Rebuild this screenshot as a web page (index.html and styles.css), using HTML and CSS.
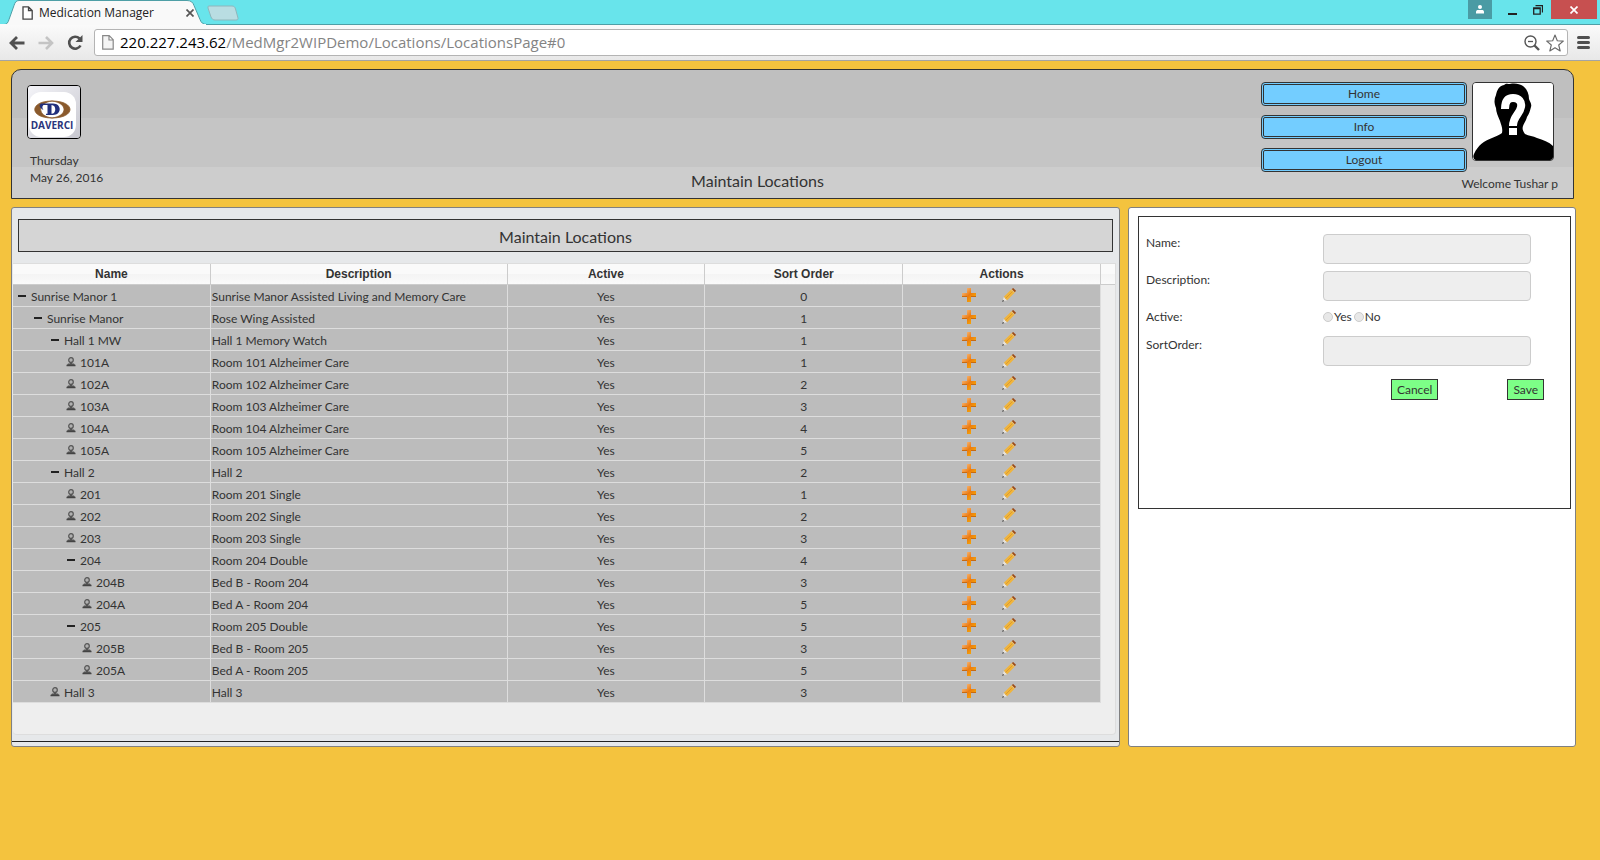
FILE: index.html
```html
<!DOCTYPE html>
<html lang="en">
<head>
<meta charset="utf-8">
<title>Medication Manager</title>
<link rel="stylesheet" href="styles.css">
</head>
<body>
<svg class="sprite" aria-hidden="true">
  <defs>
    <linearGradient id="orange" x1="0" y1="0" x2="1" y2="1"><stop offset="0" stop-color="#f9cfa0"/><stop offset=".5" stop-color="#ec7a10"/><stop offset="1" stop-color="#fac000"/></linearGradient>
    <symbol id="plus" viewBox="0 0 14 14"><path d="M5 0h4v5h5v4H9v5H5V9H0V5h5z" fill="url(#orange)"/><path d="M0 8.500h5M9 8.500h5" stroke="#c96a10"/></symbol>
    <symbol id="pencil" viewBox="0 0 15 15"><path d="M.5 14.500l1.500-5 3.500 3.500z" fill="#e8e4dc"/><path d="M0 15l1-2.500 1.500 1.500z" fill="#444"/><path d="M2 9.500l8.500-8.500 3.500 3.500L5.500 13z" fill="#f0b43c"/><path d="M3.800 11.200l8.500-8.500" stroke="#dc9a2c"/><path d="M10.500 1.200L12 0l3 3-1.200 1.500z" fill="#9c4a16"/><path d="M10 1.800l3.200 3.200" stroke="#dcd0b8" stroke-width=".8"/></symbol>
    <symbol id="person" viewBox="0 0 10 10"><circle cx="5" cy="3" r="2.300" fill="#b0b0b0" stroke="#555" stroke-width="1.200"/><path d="M3.500 5h3l-.5 1.500h2L9 8H1l1-1.500h2z" fill="#555"/><path d="M.5 8.500h9" stroke="#444" stroke-width="1.500"/></symbol>
    <symbol id="minus" viewBox="0 0 8 8"><path d="M0 3h8v2H0z" fill="#222"/></symbol>
  </defs>
</svg>

<header class="browser">
  <div class="tabstrip">
    <div class="tab">
      <svg class="tab-shape" viewBox="0 0 240 25" width="240" height="25" aria-hidden="true">
        <path d="M0 24.500h4c3 0 4-2 5-5l5-14c1-3 2-5 5-5h168c4 0 6 2 7 5l6 14c1 3 3 5 7 5v1H0z" fill="#f9f9f9" stroke="#4e9fa6"/>
        <path d="M0 25h206" stroke="#f9f9f9" stroke-width="2"/>
        <path d="M218 6h14c2 0 3 1 3.500 3l2.500 9c0 1 0 2-2 2h-21c-2 0-3-1-4-3l-3-9c0-2 0-2 2-2z" fill="#b9dde2" stroke="#8fb6bb"/>
      </svg>
      <svg class="tab-doc" viewBox="0 0 11 14" width="11" height="14" aria-hidden="true"><path d="M1 .8h5.500l3.700 3.700v8.700H1zM6.500 1v3.500H10" fill="#fff" stroke="#444" stroke-width="1.300"/></svg>
      <span class="tab-title">Medication Manager</span>
      <button class="tab-close" aria-label="Close tab"><svg viewBox="0 0 8 8" width="8" height="8"><path d="M.5.5l7 7M7.500.5l-7 7" stroke="#555" stroke-width="1.700"/></svg></button>
    </div>
    <div class="window-buttons">
      <button class="wb wb-user" aria-label="User"><svg viewBox="0 0 8 9" width="8" height="9"><circle cx="4" cy="2" r="2" fill="#fff"/><path d="M0 8.500V7c0-1.500 1-2 2-2h4c1 0 2 .5 2 2v1.500z" fill="#fff"/></svg></button>
      <button class="wb wb-min" aria-label="Minimize"><svg viewBox="0 0 9 8" width="9" height="8"><path d="M0 6h9v2H0z" fill="#222"/></svg></button>
      <button class="wb wb-max" aria-label="Restore"><svg viewBox="0 0 10 10" width="10" height="10"><path d="M.7 3h6.500v6.200H.7zM.5 3.500h7M2.500.5h7v7" fill="none" stroke="#222" stroke-width="1.300"/></svg></button>
      <button class="wb wb-close" aria-label="Close"><svg viewBox="0 0 8 8" width="8" height="8"><path d="M.5.5l7 7M7.500.5l-7 7" stroke="#fff" stroke-width="1.700"/></svg></button>
    </div>
  </div>
  <div class="toolbar">
    <button class="nav" aria-label="Back"><svg viewBox="0 0 16 14" width="16" height="14"><path d="M15.500 7H2M8 1L2 7l6 6" fill="none" stroke="#505050" stroke-width="2.800"/></svg></button>
    <button class="nav" aria-label="Forward"><svg viewBox="0 0 16 14" width="16" height="14"><path d="M.5 7H14M8 1l6 6-6 6" fill="none" stroke="#c4c4c4" stroke-width="2.600"/></svg></button>
    <button class="nav" aria-label="Reload"><svg viewBox="0 0 16 16" width="16" height="16"><path d="M13.500 10.500a6 6 0 1 1-1-7" fill="none" stroke="#505050" stroke-width="2.600"/><path d="M15.500 0v7h-7z" fill="#505050"/></svg></button>
    <div class="address">
      <svg viewBox="0 0 12 15" width="12" height="15" aria-hidden="true"><path d="M.7.7h6.500l4 4v9.500H.7zM7 1v4h4" fill="#f4f4f4" stroke="#888" stroke-width="1.200"/></svg>
      <div class="url" role="textbox" aria-label="Address">220.227.243.62<span class="path">/MedMgr2WIPDemo/Locations/LocationsPage#0</span></div>
      <svg viewBox="0 0 16 16" width="16" height="16" aria-hidden="true"><circle cx="6.500" cy="6.500" r="5.500" fill="none" stroke="#555" stroke-width="1.400"/><path d="M4 6.500h5" stroke="#555" stroke-width="1.300"/><path d="M10.500 10.500l4.500 4.500" stroke="#555" stroke-width="2.400"/></svg>
      <svg viewBox="0 0 18 18" width="18" height="18" aria-hidden="true"><path d="M9 1l2.300 5.700 6 .4-4.600 3.900 1.500 6L9 13.700 3.800 17l1.500-6L.7 7.100l6-.4z" fill="#fff" stroke="#666" stroke-width="1.100" stroke-linejoin="round"/></svg>
    </div>
    <button class="menu" aria-label="Menu"><svg viewBox="0 0 13 13" width="13" height="13"><path d="M1.500 1.500h10M1.500 6.500h10M1.500 11.500h10" stroke="#505050" stroke-width="3" stroke-linecap="round"/></svg></button>
  </div>
</header>

<div class="page">
  <div class="banner">
    <div class="brand">
      <svg class="logo" viewBox="0 0 52 52" width="52" height="52" role="img" aria-label="Daverci">
        <defs><linearGradient id="lg" x1="0" y1="0" x2="1" y2="1"><stop offset="0" stop-color="#f4f4f8"/><stop offset="1" stop-color="#c8c8d0"/></linearGradient></defs>
        <rect width="52" height="52" fill="url(#lg)"/><rect x="1" y="6" width="47" height="45" rx="12" fill="#fff"/>
        <path d="M24 15c-23 0-23 17 0 17-15-2-15-15 0-17zM24 15c24 0 24 17 0 17 16-2 16-15 0-17z" fill="#8a5a2c" stroke="#8a5a2c" stroke-width=".8"/>
        <path d="M13 17.500h12c9 0 9 11.500 0 11.500h-7v-1.200h1.500V19h-3c-2 0-3 2-1 5-4-2-5-5-2.500-6.500zM23.500 19v8.800c5 0 5-8.800 0-8.800z" fill="#22307c" fill-rule="evenodd"/>
        <text class="logo-text" x="24" y="43" text-anchor="middle">DAVERCI</text>
      </svg>
      <p class="date">Thursday<br>May 26, 2016</p>
    </div>
    <h1 class="banner-title">Maintain Locations</h1>
    <div class="account">
      <nav class="nav-buttons">
        <button class="blue">Home</button>
        <button class="blue">Info</button>
        <button class="blue">Logout</button>
      </nav>
      <svg class="avatar" viewBox="0 0 80 77" width="80" height="77" role="img" aria-label="User photo">
        <rect width="80" height="77" fill="#fff"/>
        <path d="M37 1c5-1 10 0 13 2 4 3 6 8 6 13 1 3 3 5 2 8-1 4-2 7-4 10-1 4-3 6-4 9-1 3 0 5 2 8 4 2 8 2 12 4 6 2 12 4 16 8v14H2c-2-2-2-4-1-6 4-9 10-13 18-16 4-2 8-3 10-5 1-5-1-8-2-12-2-5-4-9-4-13-2-5-2-9 0-13 1-5 3-9 8-10 2-2 4-1 6-1z"/>
        <path d="M32 26c0-8 3-11 8-11 6 0 9 4 8 9-1 7-8 9-8 19" fill="none" stroke="#fff" stroke-width="8"/>
        <path d="M36 45h8v7h-8z" fill="#fff"/>
      </svg>
      <p class="welcome">Welcome Tushar p</p>
    </div>
  </div>

  <main class="columns">
    <section class="panel list">
      <div class="list-inner">
        <h2 class="list-title">Maintain Locations</h2>
        <div class="grid">
          <table class="locations">
            <colgroup><col class="c-name"><col class="c-desc"><col class="c-std"><col class="c-std"><col class="c-std"><col class="c-gutter"></colgroup>
            <thead><tr><th>Name</th><th>Description</th><th>Active</th><th>Sort Order</th><th>Actions</th><th class="gutter"></th></tr></thead>
            <tbody>
              <tr><td class="l0"><svg class="mi"><use href="#minus"/></svg>Sunrise Manor 1</td><td>Sunrise Manor Assisted Living and Memory Care</td><td>Yes</td><td>0</td><td><button class="act" aria-label="Add"><svg><use href="#plus"/></svg></button><button class="act" aria-label="Edit"><svg><use href="#pencil"/></svg></button></td></tr>
              <tr><td class="l1"><svg class="mi"><use href="#minus"/></svg>Sunrise Manor</td><td>Rose Wing Assisted</td><td>Yes</td><td>1</td><td><button class="act" aria-label="Add"><svg><use href="#plus"/></svg></button><button class="act" aria-label="Edit"><svg><use href="#pencil"/></svg></button></td></tr>
              <tr><td class="l2"><svg class="mi"><use href="#minus"/></svg>Hall 1 MW</td><td>Hall 1 Memory Watch</td><td>Yes</td><td>1</td><td><button class="act" aria-label="Add"><svg><use href="#plus"/></svg></button><button class="act" aria-label="Edit"><svg><use href="#pencil"/></svg></button></td></tr>
              <tr><td class="l3"><svg class="pi"><use href="#person"/></svg>101A</td><td>Room 101 Alzheimer Care</td><td>Yes</td><td>1</td><td><button class="act" aria-label="Add"><svg><use href="#plus"/></svg></button><button class="act" aria-label="Edit"><svg><use href="#pencil"/></svg></button></td></tr>
              <tr><td class="l3"><svg class="pi"><use href="#person"/></svg>102A</td><td>Room 102 Alzheimer Care</td><td>Yes</td><td>2</td><td><button class="act" aria-label="Add"><svg><use href="#plus"/></svg></button><button class="act" aria-label="Edit"><svg><use href="#pencil"/></svg></button></td></tr>
              <tr><td class="l3"><svg class="pi"><use href="#person"/></svg>103A</td><td>Room 103 Alzheimer Care</td><td>Yes</td><td>3</td><td><button class="act" aria-label="Add"><svg><use href="#plus"/></svg></button><button class="act" aria-label="Edit"><svg><use href="#pencil"/></svg></button></td></tr>
              <tr><td class="l3"><svg class="pi"><use href="#person"/></svg>104A</td><td>Room 104 Alzheimer Care</td><td>Yes</td><td>4</td><td><button class="act" aria-label="Add"><svg><use href="#plus"/></svg></button><button class="act" aria-label="Edit"><svg><use href="#pencil"/></svg></button></td></tr>
              <tr><td class="l3"><svg class="pi"><use href="#person"/></svg>105A</td><td>Room 105 Alzheimer Care</td><td>Yes</td><td>5</td><td><button class="act" aria-label="Add"><svg><use href="#plus"/></svg></button><button class="act" aria-label="Edit"><svg><use href="#pencil"/></svg></button></td></tr>
              <tr><td class="l2"><svg class="mi"><use href="#minus"/></svg>Hall 2</td><td>Hall 2</td><td>Yes</td><td>2</td><td><button class="act" aria-label="Add"><svg><use href="#plus"/></svg></button><button class="act" aria-label="Edit"><svg><use href="#pencil"/></svg></button></td></tr>
              <tr><td class="l3"><svg class="pi"><use href="#person"/></svg>201</td><td>Room 201 Single</td><td>Yes</td><td>1</td><td><button class="act" aria-label="Add"><svg><use href="#plus"/></svg></button><button class="act" aria-label="Edit"><svg><use href="#pencil"/></svg></button></td></tr>
              <tr><td class="l3"><svg class="pi"><use href="#person"/></svg>202</td><td>Room 202 Single</td><td>Yes</td><td>2</td><td><button class="act" aria-label="Add"><svg><use href="#plus"/></svg></button><button class="act" aria-label="Edit"><svg><use href="#pencil"/></svg></button></td></tr>
              <tr><td class="l3"><svg class="pi"><use href="#person"/></svg>203</td><td>Room 203 Single</td><td>Yes</td><td>3</td><td><button class="act" aria-label="Add"><svg><use href="#plus"/></svg></button><button class="act" aria-label="Edit"><svg><use href="#pencil"/></svg></button></td></tr>
              <tr><td class="l3"><svg class="mi"><use href="#minus"/></svg>204</td><td>Room 204 Double</td><td>Yes</td><td>4</td><td><button class="act" aria-label="Add"><svg><use href="#plus"/></svg></button><button class="act" aria-label="Edit"><svg><use href="#pencil"/></svg></button></td></tr>
              <tr><td class="l4"><svg class="pi"><use href="#person"/></svg>204B</td><td>Bed B - Room 204</td><td>Yes</td><td>3</td><td><button class="act" aria-label="Add"><svg><use href="#plus"/></svg></button><button class="act" aria-label="Edit"><svg><use href="#pencil"/></svg></button></td></tr>
              <tr><td class="l4"><svg class="pi"><use href="#person"/></svg>204A</td><td>Bed A - Room 204</td><td>Yes</td><td>5</td><td><button class="act" aria-label="Add"><svg><use href="#plus"/></svg></button><button class="act" aria-label="Edit"><svg><use href="#pencil"/></svg></button></td></tr>
              <tr><td class="l3"><svg class="mi"><use href="#minus"/></svg>205</td><td>Room 205 Double</td><td>Yes</td><td>5</td><td><button class="act" aria-label="Add"><svg><use href="#plus"/></svg></button><button class="act" aria-label="Edit"><svg><use href="#pencil"/></svg></button></td></tr>
              <tr><td class="l4"><svg class="pi"><use href="#person"/></svg>205B</td><td>Bed B - Room 205</td><td>Yes</td><td>3</td><td><button class="act" aria-label="Add"><svg><use href="#plus"/></svg></button><button class="act" aria-label="Edit"><svg><use href="#pencil"/></svg></button></td></tr>
              <tr><td class="l4"><svg class="pi"><use href="#person"/></svg>205A</td><td>Bed A - Room 205</td><td>Yes</td><td>5</td><td><button class="act" aria-label="Add"><svg><use href="#plus"/></svg></button><button class="act" aria-label="Edit"><svg><use href="#pencil"/></svg></button></td></tr>
              <tr><td class="l2"><svg class="pi"><use href="#person"/></svg>Hall 3</td><td>Hall 3</td><td>Yes</td><td>3</td><td><button class="act" aria-label="Add"><svg><use href="#plus"/></svg></button><button class="act" aria-label="Edit"><svg><use href="#pencil"/></svg></button></td></tr>
            </tbody>
          </table>
        </div>
      </div>
    </section>

    <section class="panel detail">
      <form class="form">
        <div class="field"><label for="name">Name:</label><input class="text" id="name" type="text" disabled></div>
        <div class="field"><label for="desc">Description:</label><input class="text" id="desc" type="text" disabled></div>
        <div class="field short"><span>Active:</span><div class="radios"><input class="radio" type="radio" name="active" id="yes" disabled><label for="yes">Yes</label><input class="radio" type="radio" name="active" id="no" disabled><label for="no">No</label></div></div>
        <div class="field"><label for="sort">SortOrder:</label><input class="text" id="sort" type="text" disabled></div>
        <div class="form-buttons"><button type="button" class="green">Cancel</button><button type="button" class="green">Save</button></div>
      </form>
    </section>
  </main>
</div>
</body>
</html>
```
FILE: styles.css
```css
* { box-sizing: border-box; }
body {
  margin: 0;
  min-height: 100vh;
  background: #f4c33e;
  color: #333;
  font: 12px/16px Lato, "Liberation Sans", sans-serif;
}
button { font: inherit; color: inherit; padding: 0; border: 0; background: none; }
h1, h2, p { margin: 0; font-weight: 400; }
svg { flex: none; }
.sprite { position: absolute; width: 0; height: 0; }

/* browser window */
.browser { font-family: "Open Sans", sans-serif; }
.tabstrip {
  display: flex;
  justify-content: space-between;
  height: 25px;
  background: #68e4eb;
  border-bottom: 1px solid #4e9fa6;
}
.tab { position: relative; display: flex; align-items: center; width: 240px; height: 25px; padding-left: 22px; }
.tab-shape { position: absolute; left: 0; top: 0; }
.tab-doc, .tab-title, .tab-close { position: relative; }
.tab-title { flex: 1; margin-left: 6px; color: #222; }
.tab-close { display: flex; margin-right: 46px; }
.window-buttons { display: flex; padding-right: 3px; }
.wb { display: flex; justify-content: center; align-items: center; height: 19px; }
.wb-user { width: 24px; background: #4a9ba4; margin-right: 7px; }
.wb-min { width: 26px; padding-top: 2px; }
.wb-max { width: 26px; }
.wb-close { width: 46px; background: #c75050; }
.toolbar {
  display: flex;
  align-items: center;
  gap: 13px;
  height: 36px;
  padding: 0 10px 0 9px;
  background: linear-gradient(#fafafa, #e8e8e8);
  border-bottom: 1px solid #a4a4a4;
}
.nav, .menu { display: flex; }
.address {
  flex: 1;
  display: flex;
  align-items: center;
  gap: 6px;
  height: 27px;
  margin-right: -4px;
  margin-left: -2px;
  padding: 0 3px 0 7px;
  background: #fff;
  border: 1px solid #b4b4b4;
  border-radius: 3px;
}
.url { flex: 1; color: #000; font-size: 15px; line-height: 24px; padding-bottom: 2px; white-space: nowrap; }
.path { color: #848484; }

/* banner */
.page { padding: 8px 26px 0 11px; }
.banner {
  display: grid;
  grid-template-columns: 242px 1fr 312px;
  min-height: 130px;
  border: 1px solid #333;
  border-radius: 10px 10px 0 0;
  background: linear-gradient(#bfbfbf 48px, #c5c5c5 48px, #c5c5c5 97px, #cdcdcd 97px);
}
.brand { padding: 15px 15px 0; }
.logo { display: block; width: 54px; height: 54px; border: 1px solid #000; border-radius: 4px; }
.logo-text { font: bold 10px "Open Sans", sans-serif; fill: #2a357c; }
.date { padding: 13px 3px 0; line-height: 17px; }
.banner-title { align-self: end; padding-bottom: 6px; text-align: center; font-size: 16px; line-height: 22px; }
.account { display: grid; grid-template-columns: 206px 82px; column-gap: 5px; align-content: start; padding-top: 12px; }
.nav-buttons { display: grid; gap: 9px; }
.blue { height: 24px; border: 3px double #333; border-radius: 4px; background: #73cdff; }
.avatar { width: 82px; height: 79px; border: 1px solid #333; border-radius: 4px; }
.welcome { grid-column: 1 / 3; margin-right: -4px; padding-top: 4px; text-align: right; }

/* panels */
.columns { display: grid; grid-template-columns: 1109fr 448fr; gap: 8px; margin: 8px -2px 0 0; }
.panel { min-width: 0; border: 1px solid #808080; border-radius: 3px; }
.list { padding-bottom: 4px; background: #e6e8ea; }
.list-inner { border-bottom: 1px solid #222; padding: 11px 1px 6px; }
.list-title {
  margin: 0 5px 11px;
  padding: 6px 0 4px;
  border: 1px solid #333;
  background: #d5d5d5;
  text-align: center;
  font-size: 16px;
  line-height: 21px;
}
.grid {
  margin-right: 2px;
  padding-bottom: 31px;
  background: #eee;
  border: 1px solid #ddd;
  border-left: 0;
  border-radius: 0 0 4px 4px;
}
.locations { width: 100%; table-layout: fixed; border-collapse: separate; border-spacing: 0; }
.c-name, .c-std { width: 18%; }
.c-desc { width: 27%; }
.c-gutter { width: 14px; }
th {
  height: 21px;
  padding: 0;
  border-right: 1px solid #ccc;
  border-bottom: 1px solid #ccc;
  background: linear-gradient(#fafafa 50%, #f4f4f4 50%, #fafafa);
  font: bold 12px/18px "Liberation Sans", sans-serif;
}
.gutter { border-right: 0; }
td {
  height: 22px;
  padding: 2px 1px 0;
  border-right: 1px solid #ddd;
  border-bottom: 1px solid #ddd;
  background: #bcbcbc;
  line-height: 18px;
  text-align: center;
  white-space: nowrap;
}
td:nth-child(-n+2) { text-align: left; }
td:nth-child(5) { padding-right: 27px; }
td svg { vertical-align: top; }
.mi { width: 8px; height: 8px; margin: 4px 5px 0 0; }
.pi { width: 10px; height: 10px; margin: 3px 4px 0 -1px; }
td.l0 { padding-left: 5px; }
td.l1 { padding-left: 21px; }
td.l2 { padding-left: 38px; }
td.l3 { padding-left: 54px; }
td.l4 { padding-left: 70px; }
.act { display: inline-flex; height: 16px; margin: 0 13px; vertical-align: top; }
.act svg { width: 14px; height: 14px; }

/* detail form */
.detail { padding: 8px 4px 8px 9px; background: #fff; }
.form { min-height: 293px; padding: 17px 7px; border: 1px solid #333; }
.field { display: grid; grid-template-columns: 177px 208px; height: 37px; line-height: 18px; }
.short { height: 28px; }
.text { height: 30px; border: 1px solid #ccc; border-radius: 4px; background: #eee; }
.radios { display: flex; align-items: start; }
.radio {
  appearance: none;
  width: 10px;
  height: 10px;
  margin: 4px 1px 0 0;
  border: 1px solid #ccc;
  border-radius: 50%;
  background: #e8e8e8;
}
.radios label { margin-right: 2px; }
.form-buttons { display: flex; justify-content: end; gap: 69px; padding: 6px 19px 0 0; }
.green { height: 21px; padding: 0 5px; border: 1px solid #333; background: #7dff87; }
```
